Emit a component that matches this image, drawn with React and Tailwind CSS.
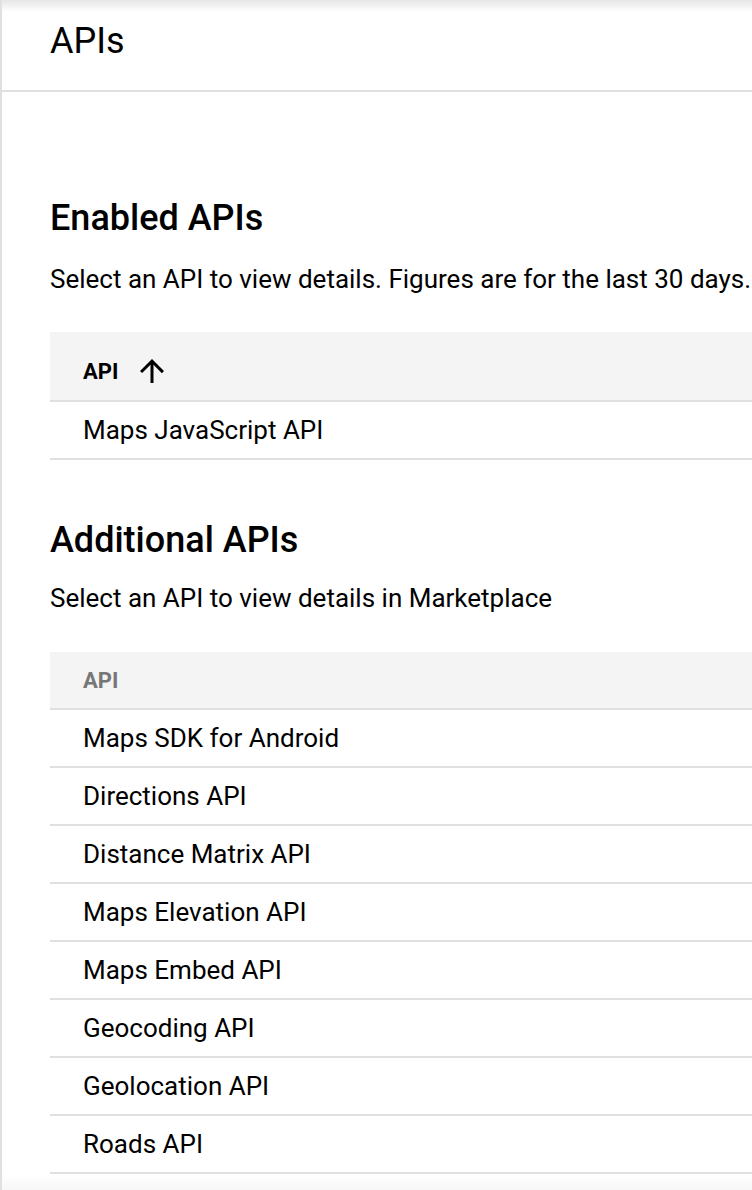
import React from 'react';

const enabledApis = ['Maps JavaScript API'];

const additionalApis = [
  'Maps SDK for Android',
  'Directions API',
  'Distance Matrix API',
  'Maps Elevation API',
  'Maps Embed API',
  'Geocoding API',
  'Geolocation API',
  'Roads API',
];

const ArrowUp = () => (
  <svg width="36" height="36" viewBox="0 0 24 24" className="text-black">
    <path d="M4 12l1.41 1.41L11 7.83V20h2V7.83l5.58 5.59L20 12l-8-8-8 8z" fill="currentColor" />
  </svg>
);

const ApiTable = ({ rows, sorted }) => (
  <div className="w-[800px]">
    {sorted ? (
      <div className="h-[70px] bg-[#f4f4f4] border-b-2 border-[#e0e0e0] flex items-center pl-[33px] pt-[10px] gap-[16px]">
        <span className="text-[22px] font-bold text-black">API</span>
        <ArrowUp />
      </div>
    ) : (
      <div className="h-[58px] bg-[#f4f4f4] border-b-2 border-[#e0e0e0] flex items-center pl-[33px]">
        <span className="text-[22px] font-bold text-[#777777]">API</span>
      </div>
    )}
    {rows.map((name) => (
      <div key={name} className="h-[58px] border-b-2 border-[#e0e0e0] flex items-center pl-[33px]">
        <span className="text-[26px] text-black">{name}</span>
      </div>
    ))}
  </div>
);

const App = () => {
  return (
    <div className="min-h-[1190px] bg-white border-l-2 border-[#e0e0e0] font-['Roboto',sans-serif] overflow-hidden relative">
      <div className="absolute top-0 left-0 right-0 h-[12px] bg-gradient-to-b from-[#e6e6e6] to-white/0" />
      <header className="h-[92px] border-b-2 border-[#e0e0e0] pl-12 flex items-center pb-2">
        <h1 className="text-[36px] text-black leading-none">APIs</h1>
      </header>

      <main className="pl-12">
        <h2 className="mt-[108px] text-[36px] font-medium text-black leading-none">Enabled APIs</h2>
        <p className="mt-[30px] text-[26px] text-black leading-none whitespace-nowrap">
          Select an API to view details. Figures are for the last 30 days.
        </p>
        <div className="mt-[40px]">
          <ApiTable rows={enabledApis} sorted />
        </div>

        <h2 className="mt-[62px] text-[36px] font-medium text-black leading-none">Additional APIs</h2>
        <p className="mt-[27px] text-[26px] text-black leading-none whitespace-nowrap">
          Select an API to view details in Marketplace
        </p>
        <div className="mt-[41px]">
          <ApiTable rows={additionalApis} />
        </div>
      </main>
      <div className="absolute bottom-0 left-0 right-0 h-[16px] bg-gradient-to-t from-[#f7f7f7] to-white/0" />
    </div>
  );
};

export default App;
